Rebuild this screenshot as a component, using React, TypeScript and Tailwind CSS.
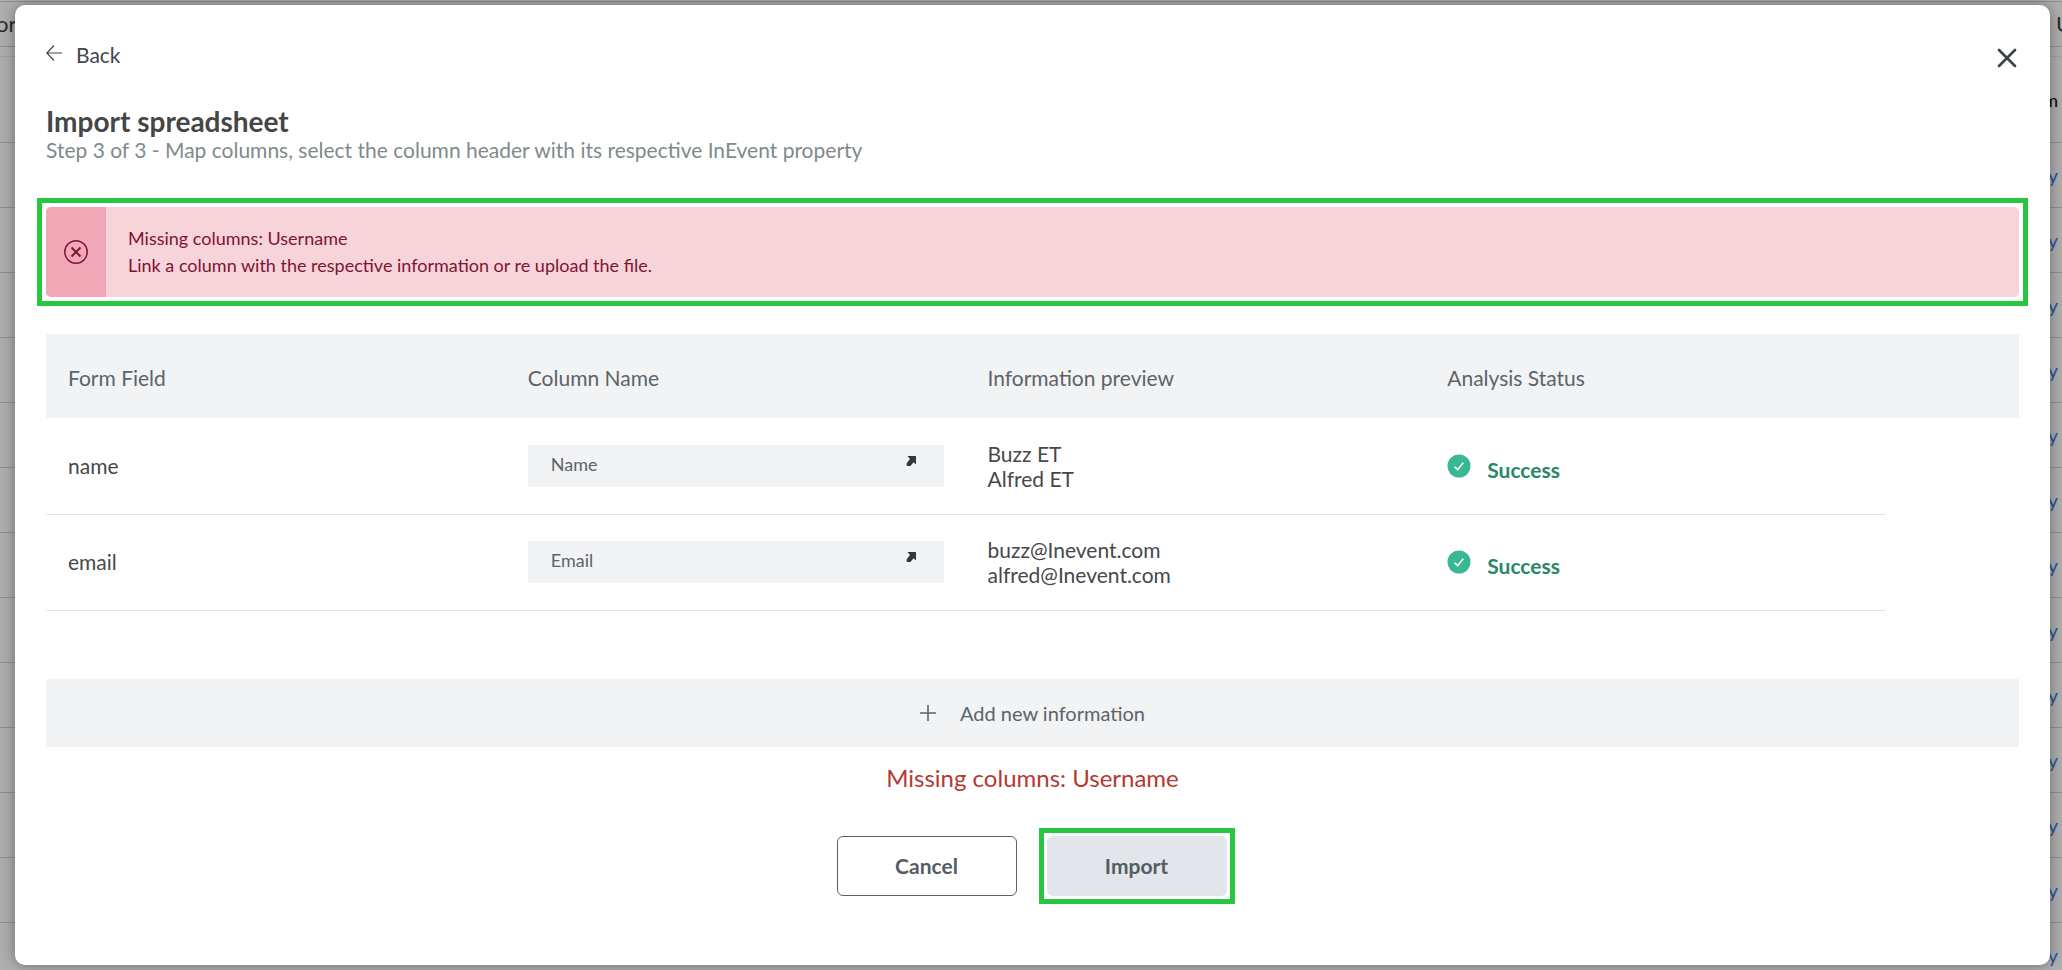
import React, { useState } from 'react';
import { X } from 'lucide-react';

interface MappingRow {
  field: string;
  column: string;
  preview: string[];
}

const rows: MappingRow[] = [
  { field: 'name', column: 'Name', preview: ['Buzz ET', 'Alfred ET'] },
  { field: 'email', column: 'Email', preview: ['buzz@Inevent.com', 'alfred@Inevent.com'] },
];

const headers = ['Form Field', 'Column Name', 'Information preview', 'Analysis Status'];

function BackArrow() {
  return (
    <svg viewBox="0 0 16 16" className="w-4 h-4" fill="none" stroke="currentColor" strokeWidth="1.2">
      <path d="M8 0.5L0.8 8L8 15.5M0.8 8H16" />
    </svg>
  );
}

function ErrorIcon() {
  return (
    <svg viewBox="0 0 24 24" className="w-6 h-6" fill="none" stroke="currentColor">
      <circle cx="12" cy="12" r="11.2" strokeWidth="1.5" />
      <path d="M7.5 7.5L16.5 16.5M16.5 7.5L7.5 16.5" strokeWidth="2" />
    </svg>
  );
}

function SelectArrow() {
  return (
    <svg viewBox="0 0 10 10" className="w-[10px] h-[10px]" fill="currentColor">
      <path d="M1.5 0H10V8.5L7.6 6.2L4.4 10H0.8L0.6 7.6L4 2.9Z" />
    </svg>
  );
}

function SuccessIcon() {
  return (
    <svg viewBox="0 0 24 24" className="w-6 h-6 shrink-0">
      <circle cx="12" cy="12" r="11.5" fill="#3cb795" />
      <path d="M7.5 12.6L10.6 15.6L16.3 8.6" fill="none" stroke="#fff" strokeWidth="1.5" />
    </svg>
  );
}

// Attendee list that sits dimmed behind the dialog
function Backdrop() {
  return (
    <div aria-hidden="true" className="absolute inset-0 overflow-hidden bg-[#b0b0b0] text-xl text-[#2b2b2b]">
      <div className="flex justify-between h-[46px] mt-px border-y border-[#8f8f8f] items-center">
        <span className="-ml-1 text-[22px]">or</span>
        <span className="w-[6px] overflow-hidden text-[22px]">U</span>
      </div>
      <div className="h-[10px] border-b border-[#a2a2a2]" />
      <div className="flex justify-end items-center h-[86px] pr-1 border-b border-[#929292] text-lg text-black">m</div>
      {Array.from({ length: 13 }, (_, i) => (
        <div key={i} className="flex justify-end items-center h-[65px] pr-1 pb-px border-b border-[#929292] text-[#2a569c]">
          y
        </div>
      ))}
    </div>
  );
}

function MappingTable() {
  const [columns, setColumns] = useState<Record<string, string>>({ name: 'Name', email: 'Email' });

  return (
    <table className="w-full table-fixed text-left">
      <colgroup>
        <col />
        <col />
        <col />
        <col />
        <col className="w-[134px]" />
      </colgroup>
      <thead>
        <tr className="h-[84px] bg-[#f1f3f5] text-[#5c6469]">
          {headers.map((h) => (
            <th key={h} scope="col" className="px-[22px] pt-1 font-normal">
              {h}
            </th>
          ))}
          <td />
        </tr>
      </thead>
      <tbody>
        {rows.map((row) => (
          <tr key={row.field} className="h-24 text-[#46484a]">
            <td className="px-[22px] border-b border-[#dfe1e2]">{row.field}</td>
            <td className="px-[22px] border-b border-[#dfe1e2]">
              <div className="relative">
                <select
                  aria-label={`Column for ${row.field}`}
                  value={columns[row.field]}
                  onChange={(e) => setColumns({ ...columns, [row.field]: e.target.value })}
                  className="block w-full h-[42px] pl-[23px] pr-10 pb-1 appearance-none bg-[#f1f3f5] text-lg text-[#5c6469] outline-none"
                >
                  <option>Name</option>
                  <option>Email</option>
                </select>
                <span className="absolute right-7 top-[11px] text-[#33373b] pointer-events-none">
                  <SelectArrow />
                </span>
              </div>
            </td>
            <td className="px-[22px] border-b border-[#dfe1e2] leading-[25px]">
              {row.preview.map((p) => (
                <div key={p}>{p}</div>
              ))}
            </td>
            <td className="px-[22px] border-b border-[#dfe1e2]">
              <div className="flex items-start gap-4 pt-1">
                <SuccessIcon />
                <span className="pt-1 leading-6 font-bold text-[#2a8768]">Success</span>
              </div>
            </td>
            <td />
          </tr>
        ))}
      </tbody>
    </table>
  );
}

export default function App() {
  return (
    <div className="relative min-h-screen pt-[5px] pb-[5px] pl-[15px] pr-3 font-[Lato,sans-serif] text-[21px]">
      <Backdrop />

      <div
        role="dialog"
        aria-labelledby="import-title"
        className="relative min-h-[calc(100vh-10px)] px-[31px] pb-14 rounded-[10px] bg-white shadow-[0_0_16px_rgba(0,0,0,0.4)]"
      >
        {/* Top bar */}
        <div className="flex items-start justify-between h-[68px] pt-8">
          <button type="button" className="flex items-start gap-[14px] text-[#3f4750]">
            <span className="pt-2">
              <BackArrow />
            </span>
            <span className="leading-9">Back</span>
          </button>
          <button type="button" aria-label="Close" className="-mr-1 pt-[5px] text-[#3a424b]">
            <X className="w-8 h-8" strokeWidth={2} />
          </button>
        </div>

        <h1 id="import-title" className="mt-8 text-[28px] leading-8 font-bold text-[#464646]">
          Import spreadsheet
        </h1>
        <p className="leading-[26px] text-[#808a8b]">
          Step 3 of 3 - Map columns, select the column header with its respective InEvent property
        </p>

        {/* Error alert */}
        <div className="mt-11 outline-5 outline-offset-4 outline-[#27c641]">
          <div role="alert" className="flex h-[90px] rounded-[5px] overflow-hidden bg-[#f7d3da] text-[#7f1433]">
            <div className="flex items-center justify-center w-[60px] bg-[#f2a7b6]">
              <ErrorIcon />
            </div>
            <div className="flex flex-col justify-center px-[22px] text-lg leading-[27px]">
              <p>Missing columns: Username</p>
              <p>Link a column with the respective information or re upload the file.</p>
            </div>
          </div>
        </div>

        <div className="mt-[37px]">
          <MappingTable />
        </div>

        <button
          type="button"
          className="flex items-center justify-center gap-6 w-full h-[68px] mt-[68px] bg-[#f1f3f5] text-xl text-[#5c6469]"
        >
          <svg viewBox="0 0 16 16" className="w-4 h-4" fill="none" stroke="currentColor" strokeWidth="1.6">
            <path d="M8 0V16M0 8H16" />
          </svg>
          Add new information
        </button>

        <p className="mt-[15px] text-center text-2xl leading-8 text-[#b53a31]">Missing columns: Username</p>

        {/* Footer actions */}
        <div className="flex justify-center gap-[30px] mt-[42px] pr-[2px] font-bold text-[#545d63]">
          <button type="button" className="w-[180px] h-[60px] rounded-md border border-[#5b6166] bg-white">
            Cancel
          </button>
          <div className="outline-5 outline-offset-3 outline-[#27c641]">
            <button type="button" className="w-[180px] h-[60px] rounded-md bg-[#e2e5ea]">
              Import
            </button>
          </div>
        </div>
      </div>
    </div>
  );
}
